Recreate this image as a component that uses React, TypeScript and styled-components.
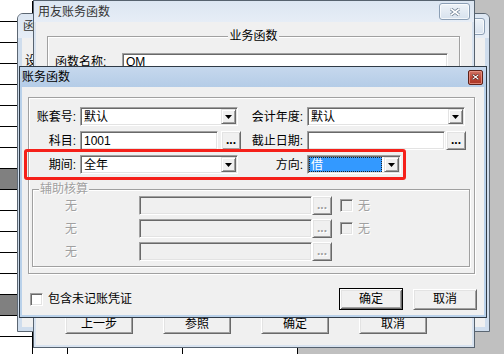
import styled, { createGlobalStyle } from "styled-components"

const GlobalStyle = createGlobalStyle`
  * { box-sizing: border-box; }
  html, body { margin: 0; padding: 0; }
  body {
    background: #c0c0c0;
    font-family: "Liberation Sans", "Noto Sans CJK SC", sans-serif;
    font-size: 12px;
    color: #000;
  }
`

const Desktop = styled.div`
  position: relative;
  width: 504px;
  height: 354px;
  overflow: hidden;
  background: #c0c0c0;
`

// spreadsheet behind the dialogs
const Sheet = styled.div`
  width: 298px;
  padding-top: 1px;
  background: #fff;
`

const SheetRow = styled.div<{ $shade?: boolean }>`
  display: grid;
  grid-template-columns: 33px 35px 115px 115px;
  height: 21px;
  background: ${p => (p.$shade ? "#808080" : "#fff")};
`

const SheetCell = styled.div`
  border-right: 1px solid #000;
  border-bottom: 1px solid #000;
`

// window chrome
const Win = styled.div<{ $x: number; $y: number; $w: number; $h: number; $frame: string; $edge: string; $round?: boolean }>`
  position: absolute;
  left: ${p => p.$x}px;
  top: ${p => p.$y}px;
  width: ${p => p.$w}px;
  height: ${p => p.$h}px;
  display: flex;
  flex-direction: column;
  border: 1px solid ${p => p.$edge};
  border-radius: ${p => (p.$round ? "6px 6px 0 0" : "0")};
  background: ${p => p.$frame};
  overflow: hidden;
`

const TitleBar = styled.div<{ $h: number; $pad: number; $active?: boolean }>`
  flex: none;
  display: flex;
  align-items: center;
  justify-content: space-between;
  height: ${p => p.$h}px;
  padding-left: ${p => p.$pad}px;
  background: ${p =>
    p.$active
      ? "linear-gradient(180deg, #c6d8ed 0%, #b4cce7 100%)"
      : "linear-gradient(180deg, #dce6f2 0%, #e6edf6 100%)"};
  color: ${p => (p.$active ? "#000" : "#333")};
  font-size: 12px;
  line-height: 14px;
  white-space: nowrap;
`

const CloseBtn = styled.div<{ $w: number; $h: number; $mr: number; $active?: boolean }>`
  flex: none;
  width: ${p => p.$w}px;
  height: ${p => p.$h}px;
  margin-right: ${p => p.$mr}px;
  display: flex;
  align-items: center;
  justify-content: center;
  border-radius: ${p => (p.$active ? 2 : 3)}px;
  border: 1px solid ${p => (p.$active ? "#5e2119" : "#8c9fb5")};
  background: ${p =>
    p.$active
      ? "linear-gradient(180deg, #cf7565 0%, #bd4535 55%, #a83424 100%)"
      : "linear-gradient(180deg, #eef3f8 0%, #d8e2ee 100%)"};
  box-shadow: inset 0 0 0 1px ${p => (p.$active ? "rgba(235,150,135,0.8)" : "rgba(255,255,255,0.7)")};
`

const Client = styled.div<{ $edge: number }>`
  flex: 1;
  display: flex;
  flex-direction: column;
  margin: 0 ${p => p.$edge}px ${p => p.$edge}px;
  background: #f0f0f0;
  min-height: 0;
`

// etched group boxes
const Group = styled.div<{ $w: number; $h?: number; $mt: number; $ml: number }>`
  flex: none;
  width: ${p => p.$w}px;
  height: ${p => (p.$h ? `${p.$h}px` : "auto")};
  margin: ${p => p.$mt}px 0 0 ${p => p.$ml}px;
  border: 1px solid #a0a0a0;
  box-shadow: inset 1px 1px 0 #fff, 1px 1px 0 #fff;
  display: flex;
  flex-direction: column;
`

const Caption = styled.span<{ $center?: boolean; $muted?: boolean }>`
  align-self: ${p => (p.$center ? "center" : "flex-start")};
  margin: -8px 0 0 ${p => (p.$center ? 0 : 6)}px;
  padding: 0 1px;
  height: 14px;
  line-height: 14px;
  background: #f0f0f0;
  color: ${p => (p.$muted ? "#a0a0a0" : "#000")};
  text-shadow: ${p => (p.$muted ? "1px 1px 0 #fff" : "none")};
`

const Row = styled.div<{ $mt: number; $pl?: number }>`
  display: flex;
  align-items: center;
  height: 19px;
  margin-top: ${p => p.$mt}px;
  padding-left: ${p => p.$pl ?? 0}px;
`

const Label = styled.span<{ $w: number; $pr?: number; $left?: boolean; $muted?: boolean }>`
  flex: none;
  width: ${p => p.$w}px;
  padding-right: ${p => p.$pr ?? 4}px;
  text-align: ${p => (p.$left ? "left" : "right")};
  line-height: 14px;
  white-space: nowrap;
  color: ${p => (p.$muted ? "#a0a0a0" : "#000")};
  text-shadow: ${p => (p.$muted ? "1px 1px 0 #fff" : "none")};
`

const Sunken = styled.div<{ $w: number; $h?: number; $ml?: number; $disabled?: boolean }>`
  flex: none;
  width: ${p => p.$w}px;
  height: ${p => p.$h ?? 19}px;
  margin-left: ${p => p.$ml ?? 0}px;
  display: flex;
  align-items: center;
  padding: 1px;
  background: ${p => (p.$disabled ? "#f0f0f0" : "#fff")};
  border: 1px solid;
  border-color: #a0a0a0 #fff #fff #a0a0a0;
  box-shadow: inset 1px 1px 0 #696969, inset -1px -1px 0 #e3e3e3;
  line-height: 14px;
  white-space: nowrap;
  overflow: hidden;
`

const FieldText = styled.span<{ $selected?: boolean }>`
  flex: 1;
  align-self: stretch;
  display: flex;
  align-items: center;
  padding-left: 2px;
  margin-right: ${p => (p.$selected ? 2 : 0)}px;
  background: ${p => (p.$selected ? "#3399ff" : "transparent")};
  color: ${p => (p.$selected ? "#fff" : "#000")};
  outline: ${p => (p.$selected ? "1px dotted #222" : "none")};
  outline-offset: -1px;
`

const Raised = styled.div<{ $w: number; $h: number; $ml?: number; $default?: boolean; $muted?: boolean }>`
  flex: none;
  width: ${p => p.$w}px;
  height: ${p => p.$h}px;
  margin-left: ${p => p.$ml ?? 0}px;
  display: flex;
  align-items: center;
  justify-content: center;
  background: #f0f0f0;
  border: 1px solid;
  border-color: ${p => (p.$default ? "#000" : "#fff #696969 #696969 #fff")};
  box-shadow: ${p =>
    p.$default
      ? "inset 1px 1px 0 #fff, inset -1px -1px 0 #696969, inset 2px 2px 0 #e3e3e3, inset -2px -2px 0 #a0a0a0"
      : "inset 1px 1px 0 #e3e3e3, inset -1px -1px 0 #a0a0a0"};
  color: ${p => (p.$muted ? "#a0a0a0" : "#000")};
  text-shadow: ${p => (p.$muted ? "1px 1px 0 #fff" : "none")};
  line-height: 14px;
  white-space: nowrap;
`

const Dots = styled.span`
  font-weight: bold;
  line-height: 17px;
  letter-spacing: 0;
`

const DropBtn = styled.div`
  flex: none;
  width: 15px;
  height: 15px;
  display: flex;
  align-items: center;
  justify-content: center;
  background: #f0f0f0;
  border: 1px solid;
  border-color: #e3e3e3 #696969 #696969 #e3e3e3;
  box-shadow: inset 1px 1px 0 #fff, inset -1px -1px 0 #a0a0a0;
`

const Check = styled.span<{ $ml?: number; $disabled?: boolean }>`
  flex: none;
  width: 13px;
  height: 13px;
  margin-left: ${p => p.$ml ?? 0}px;
  background: ${p => (p.$disabled ? "#f0f0f0" : "#fff")};
  border: 1px solid;
  border-color: #a0a0a0 #fff #fff #a0a0a0;
  box-shadow: inset 1px 1px 0 #696969, inset -1px -1px 0 #e3e3e3;
`

const Note = styled.span<{ $ml: number; $muted?: boolean }>`
  margin-left: ${p => p.$ml}px;
  line-height: 14px;
  white-space: nowrap;
  color: ${p => (p.$muted ? "#a0a0a0" : "#000")};
  text-shadow: ${p => (p.$muted ? "1px 1px 0 #fff" : "none")};
`

const ButtonBar = styled.div<{ $pl: number; $gap: number; $mb: number }>`
  display: flex;
  align-items: center;
  gap: ${p => p.$gap}px;
  margin-top: auto;
  margin-bottom: ${p => p.$mb}px;
  padding-left: ${p => p.$pl}px;
`

const BottomBar = styled.div`
  display: flex;
  align-items: center;
  height: 22px;
  margin-top: 14px;
  padding: 0 7px 0 8px;
`

const Spacer = styled.div`
  flex: 1;
`

const ClientText = styled.div`
  padding: 16px 0 0 3px;
  line-height: 14px;
  white-space: nowrap;
`

// annotation drawn on top of the screenshot
const Highlight = styled.div`
  position: absolute;
  left: 4px;
  top: 82px;
  width: 382px;
  height: 31px;
  border: 3px solid #f5201a;
  border-radius: 3px;
  pointer-events: none;
`

function XGlyph({ active }: { active?: boolean }) {
  const edge = active ? "#5a1a12" : "#6f8095"
  const w = active ? 7 : 10
  const h = active ? 6 : 8
  return (
    <svg width={w} height={h} viewBox={`0 0 ${w} ${h}`}>
      <path d={`M1 1L${w - 1} ${h - 1}M${w - 1} 1L1 ${h - 1}`} stroke={edge} strokeWidth={active ? 2.4 : 3.2} strokeLinecap="square" />
      <path d={`M1 1L${w - 1} ${h - 1}M${w - 1} 1L1 ${h - 1}`} stroke="#fff" strokeWidth={active ? 1.1 : 1.6} strokeLinecap="square" />
    </svg>
  )
}

function Arrow() {
  return (
    <svg width="7" height="4" viewBox="0 0 7 4">
      <path d="M0 0H7L3.5 4Z" fill="#000" />
    </svg>
  )
}

function Combo({ w, value, selected }: { w: number; value: string; selected?: boolean }) {
  return (
    <Sunken $w={w}>
      <FieldText $selected={selected}>{value}</FieldText>
      <DropBtn>
        <Arrow />
      </DropBtn>
    </Sunken>
  )
}

function DotsButton({ ml, muted }: { ml?: number; muted?: boolean }) {
  return (
    <Raised $w={20} $h={19} $ml={ml} $muted={muted}>
      <Dots>...</Dots>
    </Raised>
  )
}

const sheetRows = Array.from({ length: 17 }, (_, i) => i)

const auxRows = [
  { mt: 0, check: true },
  { mt: 4, check: true },
  { mt: 4, check: false },
]

export default function App() {
  return (
    <Desktop>
      <GlobalStyle />
      <Sheet>
        {sheetRows.map(i => (
          <SheetRow key={i} $shade={i === 8 || i === 14}>
            <SheetCell />
            <SheetCell />
            <SheetCell />
            <SheetCell />
          </SheetRow>
        ))}
      </Sheet>

      {/* back window */}
      <Win $x={17} $y={13} $w={473} $h={319} $frame="#cfdded" $edge="#5b6672" $round>
        <TitleBar $h={24} $pad={5}>
          函数向导
          <CloseBtn $w={31} $h={17} $mr={4}>
            <XGlyph />
          </CloseBtn>
        </TitleBar>
        <Client $edge={4}>
          <ClientText>设置</ClientText>
        </Client>
      </Win>

      {/* 用友账务函数 */}
      <Win $x={33} $y={0} $w={442} $h={348} $frame="#d8e3f0" $edge="#56626f">
        <TitleBar $h={21} $pad={4}>
          用友账务函数
          <CloseBtn $w={31} $h={17} $mr={4}>
            <XGlyph />
          </CloseBtn>
        </TitleBar>
        <Client $edge={2}>
          <Group $w={413} $h={250} $mt={14} $ml={11}>
            <Caption $center>业务函数</Caption>
            <Row $mt={9} $pl={7}>
              <Label $w={67} $pr={0} $left>函数名称:</Label>
              <Sunken $w={326} $h={18}>
                <FieldText>QM</FieldText>
              </Sunken>
            </Row>
          </Group>
          <ButtonBar $pl={29} $gap={30} $mb={11}>
            <Raised $w={68} $h={21}>上一步</Raised>
            <Raised $w={68} $h={21}>参照</Raised>
            <Raised $w={68} $h={21}>确定</Raised>
            <Raised $w={68} $h={21}>取消</Raised>
          </ButtonBar>
        </Client>
      </Win>

      {/* 账务函数 */}
      <Win $x={19} $y={66} $w={468} $h={252} $frame="#b9d1ea" $edge="#2f3a46">
        <TitleBar $h={20} $pad={2} $active>
          账务函数
          <CloseBtn $w={15} $h={15} $mr={3} $active>
            <XGlyph active />
          </CloseBtn>
        </TitleBar>
        <Client $edge={2}>
          <Group $w={447} $h={177} $mt={10} $ml={6}>
            <Row $mt={9}>
              <Label $w={51}>账套号:</Label>
              <Combo w={158} value="默认" />
              <Label $w={69}>会计年度:</Label>
              <Combo w={158} value="默认" />
            </Row>
            <Row $mt={5}>
              <Label $w={51}>科目:</Label>
              <Sunken $w={138}>
                <FieldText>1001</FieldText>
              </Sunken>
              <DotsButton ml={3} />
              <Label $w={66}>截止日期:</Label>
              <Sunken $w={138}>
                <FieldText />
              </Sunken>
              <DotsButton ml={1} />
            </Row>
            <Row $mt={5}>
              <Label $w={51}>期间:</Label>
              <Combo w={158} value="全年" />
              <Label $w={69}>方向:</Label>
              <Combo w={94} value="借" selected />
            </Row>
            <Group $w={438} $h={78} $mt={15} $ml={3}>
              <Caption $muted>辅助核算</Caption>
              {auxRows.map((r, i) => (
                <Row key={i} $mt={r.mt}>
                  <Label $w={45} $pr={1} $muted>无</Label>
                  <Sunken $w={173} $ml={61} $disabled />
                  <DotsButton muted />
                  {r.check && (
                    <>
                      <Check $ml={8} $disabled />
                      <Note $ml={5} $muted>无</Note>
                    </>
                  )}
                </Row>
              ))}
            </Group>
          </Group>
          <BottomBar>
            <Check />
            <Note $ml={5}>包含未记账凭证</Note>
            <Spacer />
            <Raised $w={64} $h={22} $default>确定</Raised>
            <Raised $w={64} $h={21} $ml={10}>取消</Raised>
          </BottomBar>
        </Client>
        <Highlight />
      </Win>
    </Desktop>
  )
}
